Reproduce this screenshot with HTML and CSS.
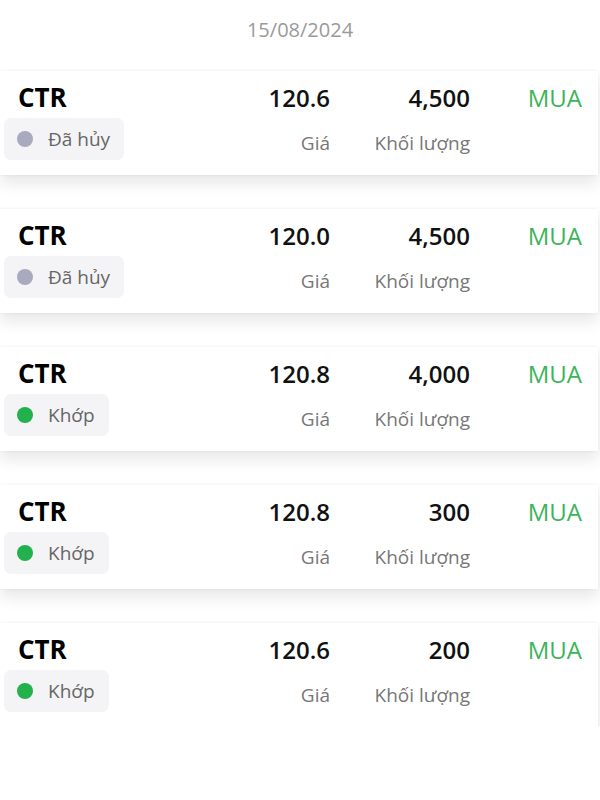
FILE: index.html
```html
<!DOCTYPE html>
<html lang="vi">
<head>
    <meta charset="UTF-8">
    <meta name="viewport" content="width=device-width, initial-scale=1.0">
    <title>Lịch sử lệnh</title>
    <link rel="stylesheet" href="styles.css">
</head>
<body>

<div class="date">15/08/2024</div>

<div class="order-list">
    <div class="order">
        <div class="symbol">CTR</div>
        <div class="num">120.6</div>
        <div class="num">4,500</div>
        <div class="side">MUA</div>
        <div class="cell"><span class="status"><span class="dot cancel"></span>Đã hủy</span></div>
        <div class="label">Giá</div>
        <div class="label">Khối lượng</div>
        <div></div>
    </div>

    <div class="order">
        <div class="symbol">CTR</div>
        <div class="num">120.0</div>
        <div class="num">4,500</div>
        <div class="side">MUA</div>
        <div class="cell"><span class="status"><span class="dot cancel"></span>Đã hủy</span></div>
        <div class="label">Giá</div>
        <div class="label">Khối lượng</div>
        <div></div>
    </div>

    <div class="order">
        <div class="symbol">CTR</div>
        <div class="num">120.8</div>
        <div class="num">4,000</div>
        <div class="side">MUA</div>
        <div class="cell"><span class="status"><span class="dot match"></span>Khớp</span></div>
        <div class="label">Giá</div>
        <div class="label">Khối lượng</div>
        <div></div>
    </div>

    <div class="order">
        <div class="symbol">CTR</div>
        <div class="num">120.8</div>
        <div class="num">300</div>
        <div class="side">MUA</div>
        <div class="cell"><span class="status"><span class="dot match"></span>Khớp</span></div>
        <div class="label">Giá</div>
        <div class="label">Khối lượng</div>
        <div></div>
    </div>

    <div class="order">
        <div class="symbol">CTR</div>
        <div class="num">120.6</div>
        <div class="num">200</div>
        <div class="side">MUA</div>
        <div class="cell"><span class="status"><span class="dot match"></span>Khớp</span></div>
        <div class="label">Giá</div>
        <div class="label">Khối lượng</div>
        <div></div>
    </div>
</div>

</body>
</html>
```

FILE: styles.css
```css
body {
    margin: 0;
    background-color: white;
    font-family: "Open Sans", "Noto Sans", sans-serif;
    color: #111;
}
.date {
    text-align: center;
    color: #9a9a9a;
    font-size: 20px;
    line-height: 26px;
    padding-top: 17px;
    height: 54px;
}
.order-list {
    display: flex;
    flex-direction: column;
    gap: 34px;
}
.order {
    width: 598px;
    box-sizing: border-box;
    background-color: white;
    box-shadow: 0 0 3px rgba(0, 0, 0, 0.07), 0 9px 14px rgba(0, 0, 0, 0.09);
    padding: 10px 16px 15px 4px;
    display: grid;
    grid-template-columns: 1fr 120px 140px 112px;
    grid-template-rows: 32px 42px;
    row-gap: 5px;
    align-items: center;
}
.symbol {
    font-size: 26px;
    font-weight: 700;
    padding-left: 14px;
    color: #000;
}
.num {
    font-size: 24px;
    font-weight: 600;
    text-align: right;
    color: #111;
}
.side {
    font-size: 24px;
    color: #3cb45a;
    text-align: right;
}
.cell {
    height: 42px;
}
.status {
    display: inline-flex;
    align-items: center;
    height: 42px;
    box-sizing: border-box;
    padding: 0 14px 0 13px;
    background-color: #f4f4f6;
    border-radius: 7px;
    font-size: 19px;
    color: #666;
}
.dot {
    width: 16px;
    height: 16px;
    border-radius: 50%;
    margin-right: 15px;
}
.dot.cancel {
    background-color: #a9a9bf;
}
.dot.match {
    background-color: #22b14c;
}
.label {
    font-size: 19px;
    color: #777;
    text-align: right;
    padding-top: 8px;
}
```
